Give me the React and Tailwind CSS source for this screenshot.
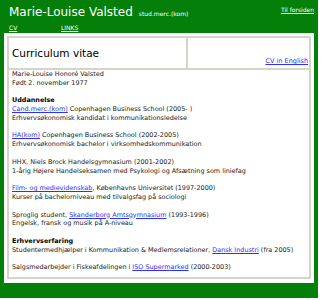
export default function App() {
  const f = { fontFamily: '"DejaVu Sans", Verdana, sans-serif' };
  const L = ({ children }) => (
    <a className="text-[#2f2fff] underline" href="#">{children}</a>
  );
  return (
    <div className="w-[323px] h-[300px] bg-white" style={f}>
      <div className="w-[318px] h-[298px] bg-[#04800a] flex flex-col">
        <div className="h-[33px] px-[9px] text-white relative">
          <div className="pt-[5px] flex items-baseline">
            <span className="text-[12px] leading-[14px]">Marie-Louise Valsted</span>
            <span className="text-[6px] ml-[6px]">stud.merc.(kom)</span>
          </div>
          <a href="#" className="absolute right-[4px] top-[5px] text-[6px] underline text-white">Til forsiden</a>
          <div className="flex text-[6px] mt-[4px]">
            <a href="#" className="underline w-[52px]">CV</a>
            <a href="#" className="underline">LINKS</a>
          </div>
        </div>
        <div className="mx-[4px] bg-white h-[250px] p-[3px] pb-[4px]">
          <div className="border-2 border-[#d6d3c9] h-full flex flex-col">
            <div className="flex h-[32px] border-b-2 border-[#d6d3c9]">
              <div className="w-[179px] border-r-2 border-[#d6d3c9] flex items-center pl-[3px] pt-[1px]">
                <span className="text-[10.5px] text-black">Curriculum vitae</span>
              </div>
              <div className="flex-1 flex items-end justify-end pr-[1px] pb-[1px]">
                <span className="text-[6.5px]"><L>CV in English</L></span>
              </div>
            </div>
            <div className="px-[3px] text-[6.45px] leading-[8.78px] text-[#222]">
              <div>Marie-Louise Honoré Valsted</div>
              <div>Født 2. november 1977</div>
              <div>&nbsp;</div>
              <div className="font-bold text-black">Uddannelse</div>
              <div><L>Cand.merc.(kom)</L> Copenhagen Business School (2005- )</div>
              <div>Erhvervsøkonomisk kandidat i kommunikationsledelse</div>
              <div>&nbsp;</div>
              <div><L>HA(kom)</L> Copenhagen Business School (2002-2005)</div>
              <div>Erhvervsøkonomisk bachelor i virksomhedskommunikation</div>
              <div>&nbsp;</div>
              <div>HHX, Niels Brock Handelsgymnasium (2001-2002)</div>
              <div>1-årig Højere Handelseksamen med Psykologi og Afsætning som liniefag</div>
              <div>&nbsp;</div>
              <div><L>Film- og medievidenskab</L>, Københavns Universitet (1997-2000)</div>
              <div>Kurser på bachelorniveau med tilvalgsfag på sociologi</div>
              <div>&nbsp;</div>
              <div>Sproglig student, <L>Skanderborg Amtsgymnasium</L> (1993-1996)</div>
              <div>Engelsk, fransk og musik på A-niveau</div>
              <div>&nbsp;</div>
              <div className="font-bold text-black">Erhvervserfaring</div>
              <div>Studentermedhjælper i Kommunikation &amp; Medlemsrelationer, <L>Dansk Industri</L> (fra 2005)</div>
              <div>&nbsp;</div>
              <div>Salgsmedarbejder i Fiskeafdelingen i <L>ISO Supermarked</L> (2000-2003)</div>
            </div>
          </div>
        </div>
      </div>
    </div>
  );
}
